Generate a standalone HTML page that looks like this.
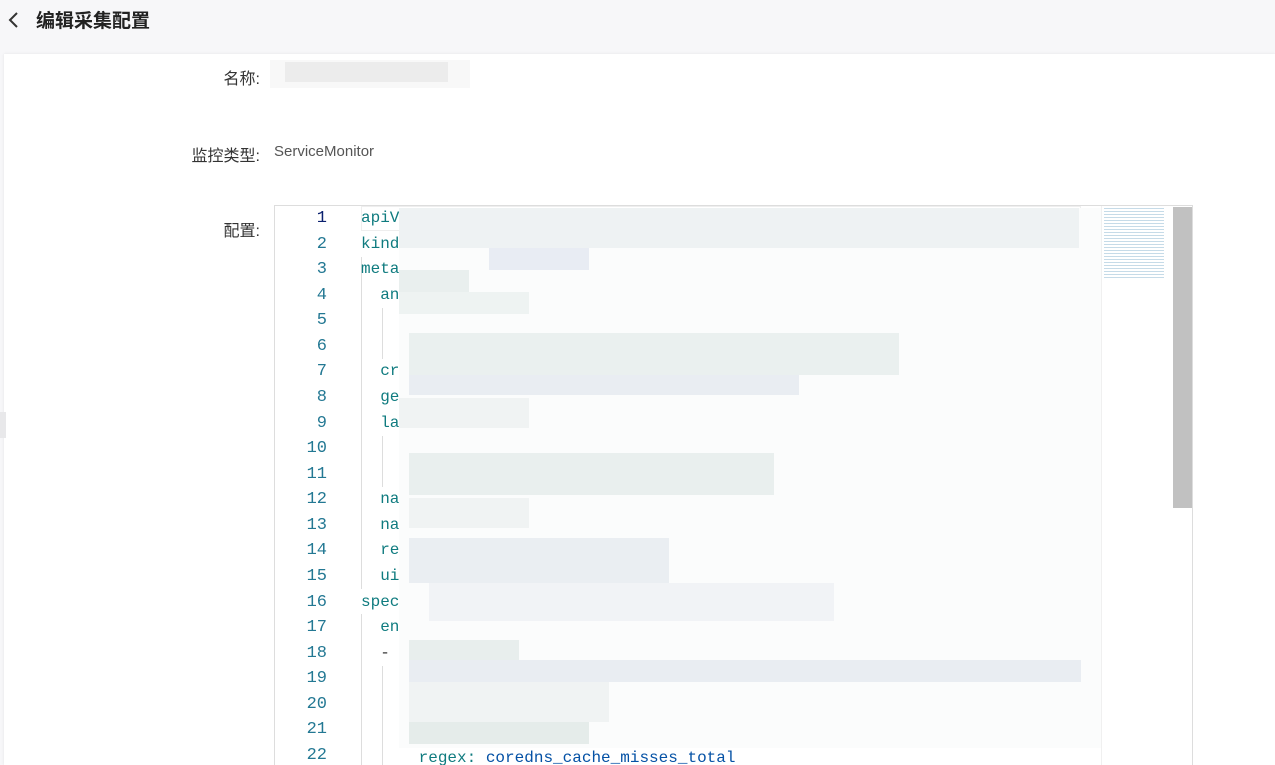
<!DOCTYPE html>
<html><head><meta charset="utf-8"><style>
*{margin:0;padding:0;box-sizing:border-box}
html,body{width:1275px;height:765px;overflow:hidden}
body{background:#f7f7f9;font-family:"Liberation Sans","Noto Sans CJK SC",sans-serif;position:relative}
.hdr{position:absolute;left:0;top:0;width:1275px;height:54px;background:#f7f7f9}
.title{position:absolute;left:36px;top:6px;font-size:19px;font-weight:bold;color:#222}
.back{position:absolute;left:6px;top:10px}
.card{position:absolute;left:4px;top:54px;width:1271px;height:711px;background:#fff;box-shadow:0 0 3px rgba(0,0,0,.08)}
.lbl{position:absolute;font-size:16px;color:#333;text-align:right;width:200px}
.val{position:absolute;font-size:15px;color:#555}
.ed{position:absolute;left:274px;top:205px;width:919px;height:560px;border:1px solid #ddd;border-bottom:none;background:#fff;overflow:hidden;font-family:"Liberation Mono","DejaVu Sans Mono",monospace;font-size:16px}
.ln{position:absolute;left:0;width:52px;text-align:right;color:#237893;height:25.57px;line-height:25.57px;font-size:17px}
.cd{position:absolute;left:86px;color:#0f7b7f;height:25.57px;line-height:25.57px;white-space:pre}
.blur{position:absolute;left:124px;top:2px;width:702px;height:540px;background:#fbfcfc}
.t{position:absolute;height:30px}
.mm{position:absolute;left:826px;top:0;width:72px;height:570px;background:#fff;border-left:1px solid #f0f0f0}
.sb{position:absolute;left:898px;top:1px;width:19px;height:301px;background:#c1c1c1}
.guide{position:absolute;width:1px;background:#ddd}
</style></head><body>
<div class="hdr">
<svg class="back" width="14" height="20" viewBox="0 0 14 20"><path d="M11 3 L4 10 L11 17" fill="none" stroke="#333" stroke-width="2"/></svg>
<div class="title">编辑采集配置</div>
</div>
<div class="card"></div>
<div style="position:absolute;left:0;top:412px;width:6px;height:26px;background:#e8e8ea"></div>
<div class="lbl" style="left:60px;top:65px">名称:</div>
<div style="position:absolute;left:270px;top:60px;width:200px;height:28px;background:#f8f8f8"></div>
<div style="position:absolute;left:285px;top:62px;width:163px;height:20px;background:#ececec"></div>
<div class="lbl" style="left:60px;top:142px">监控类型:</div>
<div class="val" style="left:274px;top:143px">ServiceMonitor</div>
<div class="lbl" style="left:60px;top:217px">配置:</div>
<div class="ed">
<div style="position:absolute;left:86px;top:0;width:720px;height:25px;border:1px solid #eee"></div>
<div class="guide" style="left:86px;top:51px;height:332px"></div>
<div class="guide" style="left:107px;top:102px;height:51px"></div>
<div class="guide" style="left:107px;top:230px;height:51px"></div>
<div class="guide" style="left:86px;top:408px;height:170px"></div>
<div class="guide" style="left:107px;top:460px;height:120px"></div>
<div class="ln" style="top:0;color:#0b216f">1</div><div class="cd" style="top:0">apiV</div>
<div class="ln" style="top:25.57px">2</div><div class="cd" style="top:25.57px">kind</div>
<div class="ln" style="top:51.1px">3</div><div class="cd" style="top:51.1px">meta</div>
<div class="ln" style="top:76.7px">4</div><div class="cd" style="top:76.7px">  an</div>
<div class="ln" style="top:102.3px">5</div>
<div class="ln" style="top:127.8px">6</div>
<div class="ln" style="top:153.4px">7</div><div class="cd" style="top:153.4px">  cr</div>
<div class="ln" style="top:179px">8</div><div class="cd" style="top:179px">  ge</div>
<div class="ln" style="top:204.6px">9</div><div class="cd" style="top:204.6px">  la</div>
<div class="ln" style="top:230.1px">10</div>
<div class="ln" style="top:255.7px">11</div>
<div class="ln" style="top:281.3px">12</div><div class="cd" style="top:281.3px">  na</div>
<div class="ln" style="top:306.8px">13</div><div class="cd" style="top:306.8px">  na</div>
<div class="ln" style="top:332.4px">14</div><div class="cd" style="top:332.4px">  re</div>
<div class="ln" style="top:358px">15</div><div class="cd" style="top:358px">  ui</div>
<div class="ln" style="top:383.5px">16</div><div class="cd" style="top:383.5px">spec</div>
<div class="ln" style="top:409.1px">17</div><div class="cd" style="top:409.1px">  en</div>
<div class="ln" style="top:434.7px">18</div><div class="cd" style="top:434.7px;color:#333">  -</div>
<div class="cd" style="top:434.7px;left:820px;color:#0451a5">ker</div>
<div class="ln" style="top:460.3px">19</div>
<div class="ln" style="top:485.8px">20</div>
<div class="ln" style="top:511.4px">21</div>
<div class="ln" style="top:537px">22</div><div class="cd" style="top:540px">      regex: <span style="color:#0451a5">coredns_cache_misses_total</span></div>
<div class="blur">
<div class="t" style="left:0;top:0;width:680px;height:40px;background:#eef2f3"></div>
<div class="t" style="left:90px;top:40px;width:100px;height:22px;background:#e8ecf3"></div>
<div class="t" style="left:0;top:62px;width:70px;height:22px;background:#e9efee"></div>
<div class="t" style="left:0;top:84px;width:130px;height:22px;background:#eef3f2"></div>
<div class="t" style="left:10px;top:125px;width:490px;height:42px;background:#eaf0ef"></div>
<div class="t" style="left:10px;top:167px;width:390px;height:20px;background:#e9edf2"></div>
<div class="t" style="left:0;top:190px;width:130px;height:30px;background:#f0f3f3"></div>
<div class="t" style="left:10px;top:245px;width:365px;height:42px;background:#e9efee"></div>
<div class="t" style="left:10px;top:290px;width:120px;height:30px;background:#f0f3f3"></div>
<div class="t" style="left:10px;top:330px;width:260px;height:45px;background:#eaeef2"></div>
<div class="t" style="left:30px;top:375px;width:405px;height:38px;background:#f1f3f6"></div>
<div class="t" style="left:10px;top:432px;width:110px;height:20px;background:#e8eeed"></div>
<div class="t" style="left:10px;top:452px;width:672px;height:22px;background:#e9edf2"></div>
<div class="t" style="left:10px;top:474px;width:200px;height:40px;background:#f0f3f3"></div>
<div class="t" style="left:10px;top:514px;width:180px;height:22px;background:#e5ecea"></div>
</div>
<div class="mm">
<div style="position:absolute;left:2px;top:2px;width:60px;height:70px;background:repeating-linear-gradient(#9fc3d8 0 1px,#fff 1px 3px);opacity:.6"></div>
</div>
<div class="sb"></div>
</div>
</body></html>
